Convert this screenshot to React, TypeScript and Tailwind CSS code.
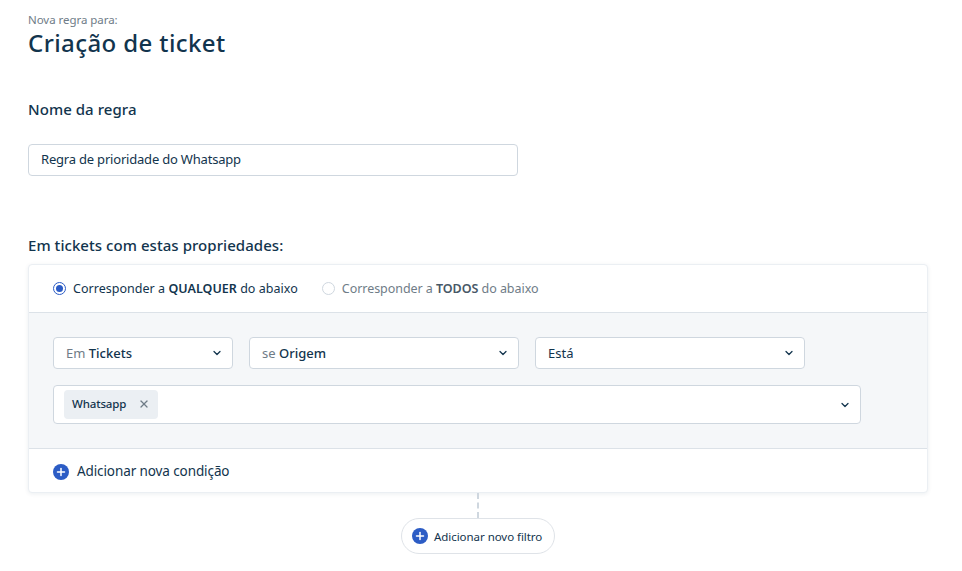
import { ChevronDown, Plus, X } from "lucide-react";

const font = "font-['Noto_Sans',sans-serif]";

function AddIcon() {
  return (
    <span className="flex h-4 w-4 shrink-0 items-center justify-center rounded-full bg-[#2c5cc5]">
      <Plus className="h-3 w-3 text-white" strokeWidth={3} />
    </span>
  );
}

function SelectBox({ width, prefix, value }: { width: string; prefix?: string; value: string }) {
  return (
    <div className={`flex h-8 items-center justify-between rounded border border-[#cfd7df] bg-white pl-3 pr-[9px] text-[13px] text-[#12344d] ${width}`}>
      <span className="pt-0.5">
        {prefix && <span className="text-[#6f7c87]">{prefix} </span>}
        <span className={prefix ? "font-medium" : ""}>{value}</span>
      </span>
      <ChevronDown className="h-3 w-3 text-[#12344d]" strokeWidth={2.5} />
    </div>
  );
}

export default function App() {
  return (
    <div className={`h-[571px] w-[962px] overflow-hidden bg-white pl-7 pt-[12px] ${font}`}>
      <p className="text-[11.5px] leading-[16px] tracking-[-0.05px] text-[#6f7c87]">Nova regra para:</p>
      <h1 className="mt-px text-[24px] font-medium leading-[28px] tracking-[0.4px] text-[#12344d]">Criação de ticket</h1>

      <h2 className="mt-[42px] text-[15px] font-medium leading-5 tracking-[0.05px] text-[#12344d]">Nome da regra</h2>
      <div className="mt-[25px] flex h-8 w-[490px] items-center rounded border border-[#cfd7df] bg-white pl-3 text-[13px] tracking-[-0.2px] text-[#12344d]">
        Regra de prioridade do Whatsapp
      </div>

      <h2 className="mt-[59px] text-[15px] font-medium leading-5 tracking-[0.05px] text-[#12344d]">Em tickets com estas propriedades:</h2>

      <div className="mt-[9px] w-[900px] overflow-hidden rounded border border-[#ebeff3] bg-white shadow-[0_1px_4px_rgba(18,52,77,0.08)]">
        <div className="flex h-[47px] items-center gap-6 pl-6 text-[12.5px]">
          <label className="flex items-center gap-[7px] text-[#12344d]">
            <span className="flex h-[13px] w-[13px] items-center justify-center rounded-full border border-[#2c5cc5]">
              <span className="h-[7px] w-[7px] rounded-full bg-[#2c5cc5]" />
            </span>
            <span className="pt-0.5 tracking-[0.03px]">Corresponder a <b className="font-semibold">QUALQUER</b> do abaixo</span>
          </label>
          <label className="flex items-center gap-[7px] text-[#6f7c87]">
            <span className="h-[13px] w-[13px] rounded-full border border-[#cfd7df]" />
            <span className="pt-0.5 tracking-[-0.05px]">Corresponder a <b className="font-semibold text-[#475867]">TODOS</b> do abaixo</span>
          </label>
        </div>

        <div className="flex h-[137px] flex-col gap-4 border-y border-[#dce2e8] bg-[#f5f7f9] pl-6 pt-6">
          <div className="flex gap-4">
            <SelectBox width="w-[180px]" prefix="Em" value="Tickets" />
            <SelectBox width="w-[270px]" prefix="se" value="Origem" />
            <SelectBox width="w-[270px]" value="Está" />
          </div>
          <div className="flex h-[39px] w-[808px] items-center justify-between rounded border border-[#cfd7df] bg-white pl-[10px] pr-[9px]">
            <span className="flex h-[29px] w-[94px] items-center justify-between rounded bg-[#ebeff3] pb-px pl-2 pr-[8px] text-[11.5px] font-medium tracking-[-0.15px] text-[#12344d]">
              Whatsapp
              <X className="h-3 w-3 text-[#6f7c87]" strokeWidth={2.5} />
            </span>
            <ChevronDown className="h-3 w-3 text-[#12344d]" strokeWidth={2.5} />
          </div>
        </div>

        <div className="flex h-[43px] items-center gap-2 pl-6 pt-0.5 text-[13.5px] tracking-[-0.1px] text-[#12344d]">
          <AddIcon />
          Adicionar nova condição
        </div>
      </div>

      <div className="flex w-[900px] flex-col items-center">
        <div className="h-[25px] border-l-2 border-dashed border-[#cfd7df]" />
        <button className="flex h-9 w-[154px] items-center gap-[6px] rounded-full border border-[#dfe3e8] bg-white pl-[10px] text-[11.5px] tracking-[-0.05px] text-[#12344d]">
          <AddIcon />
          <span className="pt-0.5">Adicionar novo filtro</span>
        </button>
      </div>
    </div>
  );
}
